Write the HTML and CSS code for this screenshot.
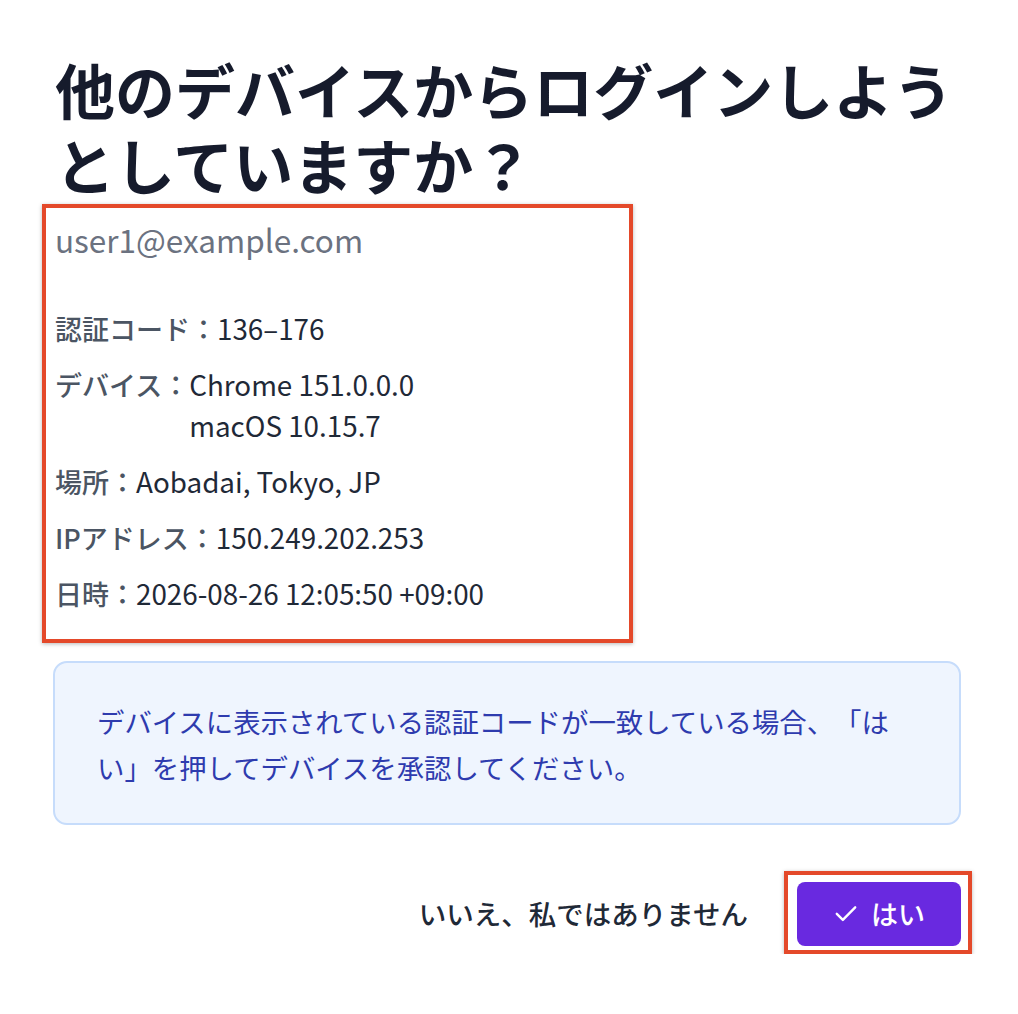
FILE: index.html
```html
<!DOCTYPE html>
<html lang="ja">
<head>
<meta charset="utf-8">
<title>デバイス承認</title>
<link rel="stylesheet" href="styles.css">
</head>
<body>
<main class="page">
  <h1 class="title">他のデバイスからログインしようとしていますか？</h1>
  <section class="details highlight">
    <div class="email">user1@example.com</div>
    <dl class="rows">
      <div class="row"><dt>認証コード：</dt><dd>136–176</dd></div>
      <div class="row"><dt>デバイス：</dt><dd>Chrome 151.0.0.0<br>macOS 10.15.7</dd></div>
      <div class="row"><dt>場所：</dt><dd>Aobadai, Tokyo, JP</dd></div>
      <div class="row"><dt>IPアドレス：</dt><dd>150.249.202.253</dd></div>
      <div class="row"><dt>日時：</dt><dd>2026-08-26 12:05:50 +09:00</dd></div>
    </dl>
  </section>
  <div class="notice">デバイスに表示されている認証コードが一致している場合、「はい」を押してデバイスを承認してください。</div>
  <div class="actions">
    <button class="btn-text" type="button">いいえ、私ではありません</button>
    <div class="highlight btn-wrap">
      <button class="btn-primary" type="button">
        <svg class="check" viewBox="0 0 24 24" width="26" height="26" aria-hidden="true"><path d="M3.5 12.8l5.6 5.6L20.5 6.8" fill="none" stroke="#fff" stroke-width="2.2" stroke-linecap="round" stroke-linejoin="round"/></svg>
        <span>はい</span>
      </button>
    </div>
  </div>
</main>
</body>
</html>
```
FILE: styles.css
```css
* { box-sizing: border-box; }
html, body { margin: 0; padding: 0; background: #ffffff; }
body {
  font-family: "Noto Sans CJK JP", "Noto Sans", sans-serif;
  color: #1f2937;
  text-spacing-trim: space-all;
}
.page {
  width: 1018px;
  padding: 51px 57px 0 53px;
}
.title {
  margin: 0 0 3px 2px;
  font-size: 60px;
  line-height: 75px;
  font-weight: 700;
  color: #161b2c;
  letter-spacing: 0;
}
.highlight {
  border: 4px solid #e4492a;
  box-shadow: 0 1px 4px rgba(0, 0, 0, 0.28);
}
.details {
  width: 591px;
  margin-left: -11px;
  padding: 10px 9px 25px 9px;
}
.email {
  font-size: 31.5px;
  line-height: 42px;
  color: #6b7280;
  margin-bottom: 48px;
}
.rows { margin: 0; }
.row {
  display: flex;
  font-size: 27px;
  line-height: 41px;
  margin-bottom: 15px;
}
.row:last-child { margin-bottom: 0; }
.row dt {
  color: #4b5563;
  font-weight: 500;
}
.row dd {
  margin: 0;
  color: #1f2937;
  font-size: 27.8px;
}
.notice {
  margin-top: 18px;
  background: #eff5fe;
  border: 2px solid #c6dcfb;
  border-radius: 14px;
  padding: 35px 50px 33px 42px;
  font-size: 27.4px;
  line-height: 46px;
  color: #2e3bae;
}
.actions {
  display: flex;
  justify-content: flex-end;
  align-items: center;
  gap: 36px;
  margin-top: 46px;
  margin-right: -11px;
}
.btn-text {
  border: 0;
  background: none;
  padding: 0;
  font-family: inherit;
  font-size: 27.5px;
  font-weight: 500;
  color: #1f2937;
  line-height: 40px;
}
.btn-wrap {
  padding: 7px 7px 4px 9px;
}
.btn-primary {
  display: flex;
  align-items: center;
  justify-content: center;
  gap: 12px;
  width: 164px;
  height: 64px;
  border: 0;
  border-radius: 8px;
  background: #6929e0;
  color: #ffffff;
  font-family: inherit;
  font-size: 27px;
  font-weight: 500;
  padding: 0 0 2px 0;
}
.check { display: block; }
```
